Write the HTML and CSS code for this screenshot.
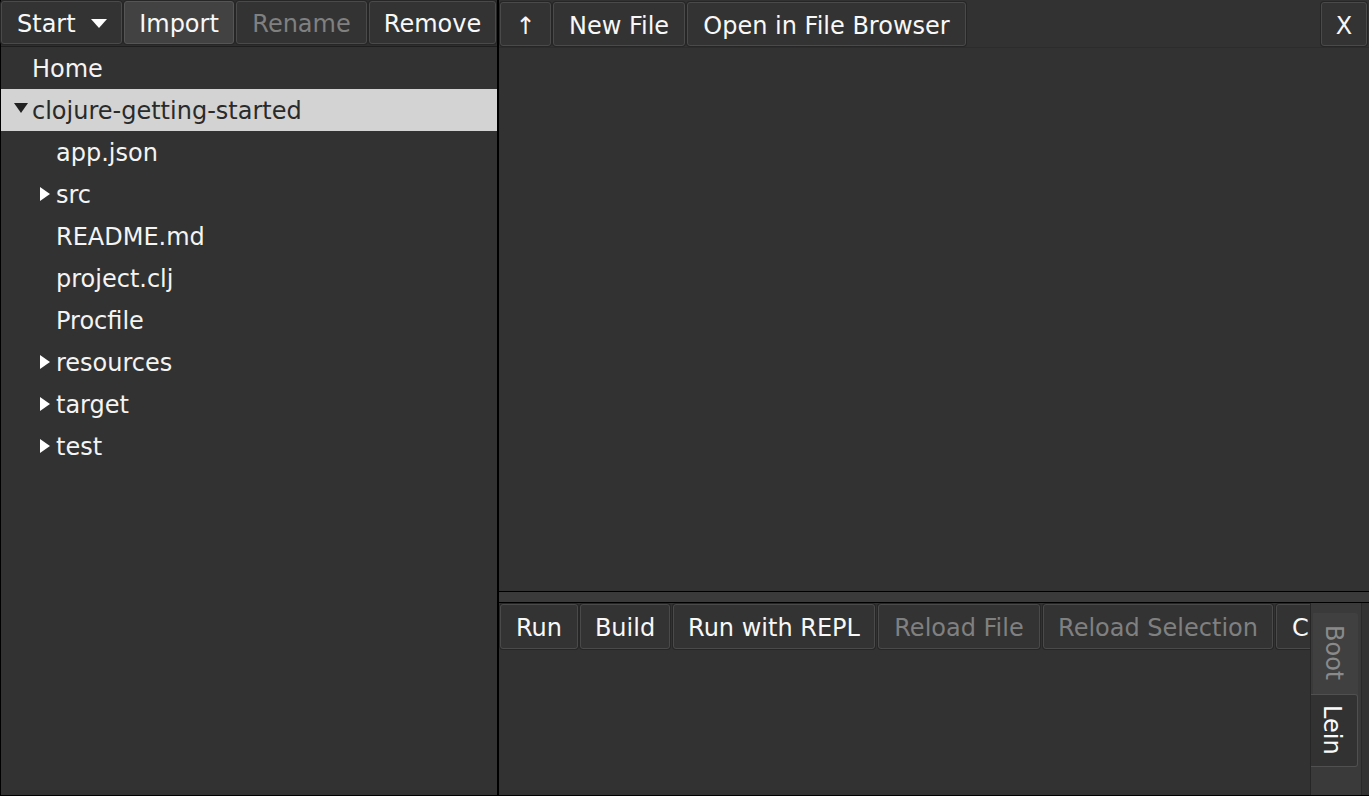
FILE: index.html
```html
<!DOCTYPE html>
<html>
<head>
<meta charset="utf-8">
<link rel="stylesheet" href="styles.css">
</head>
<body>
<div class="app">
  <div class="left">
    <div class="toolbar left-toolbar">
      <div class="btn btn-start">Start <span class="caret"></span></div>
      <div class="btn btn-hover w-import">Import</div>
      <div class="btn disabled w-rename">Rename</div>
      <div class="btn w-remove">Remove</div>
    </div>
    <div class="tree">
      <div class="row lvl0">Home</div>
      <div class="row lvl0 selected"><span class="tri down"></span>clojure-getting-started</div>
      <div class="row lvl1">app.json</div>
      <div class="row lvl1"><span class="tri right"></span>src</div>
      <div class="row lvl1">README.md</div>
      <div class="row lvl1">project.clj</div>
      <div class="row lvl1">Procfile</div>
      <div class="row lvl1"><span class="tri right"></span>resources</div>
      <div class="row lvl1"><span class="tri right"></span>target</div>
      <div class="row lvl1"><span class="tri right"></span>test</div>
    </div>
  </div>
  <div class="right">
    <div class="top-pane">
      <div class="toolbar right-toolbar">
        <div class="btn w-up">↑</div>
        <div class="btn w-newfile">New File</div>
        <div class="btn w-open">Open in File Browser</div>
        <div class="spacer"></div>
        <div class="btn w-x">X</div>
      </div>
      <div class="editor"></div>
    </div>
    <div class="divider"></div>
    <div class="bottom-pane">
      <div class="bottom-main">
        <div class="toolbar run-toolbar">
          <div class="btn w-run">Run</div>
          <div class="btn w-build">Build</div>
          <div class="btn w-repl">Run with REPL</div>
          <div class="btn disabled w-rfile">Reload File</div>
          <div class="btn disabled w-rsel">Reload Selection</div>
          <div class="btn">Clean</div>
        </div>
      </div>
      <div class="tabs">
        <div class="tab inactive">Boot</div>
        <div class="tab active">Lein</div>
      </div>
    </div>
  </div>
</div>
</body>
</html>
```

FILE: styles.css
```css
* { box-sizing: border-box; }
html, body {
  margin: 0;
  padding: 0;
  background: #323232;
}
body {
  font-family: "DejaVu Sans", sans-serif;
  font-size: 24px;
  color: #f4f4f4;
  width: 1369px;
  height: 796px;
  overflow: hidden;
}
.app {
  display: flex;
  width: 1369px;
  height: 796px;
  border-left: 1px solid #000;
  border-bottom: 1px solid #000;
}
.left {
  width: 498px;
  border-right: 2px solid #000;
  display: flex;
  flex-direction: column;
  background: #323232;
}
.toolbar {
  display: flex;
  align-items: stretch;
  gap: 2px;
}
.left-toolbar {
  height: 47px;
  padding: 1px 1px 2px 0;
  border-bottom: 1px solid #1e1e1e;
  background: #2e2e2e;
}
.btn {
  display: flex;
  align-items: center;
  justify-content: center;
  padding: 3px 15px 0;
  background: #333333;
  border: 1px solid #4a4a4a;
  border-radius: 3px;
  box-shadow: 0 0 0 1px #262626;
  white-space: nowrap;
  color: #f8f8f8;
  flex: none;
}
.btn.disabled { color: #808080; }
.btn-hover { background: #424242; border-color: #555; }
.btn-start { width: 121px; justify-content: flex-start; }
.w-import { width: 110px; }
.w-rename { width: 131px; }
.w-remove { width: 127px; }
.w-up { width: 51px; padding-left: 0; padding-right: 0; }
.w-newfile { width: 132px; }
.w-open { width: 279px; }
.w-x { width: 46px; padding-left: 0; padding-right: 0; }
.w-run { width: 78px; }
.w-build { width: 90px; }
.w-repl { width: 202px; }
.w-rfile { width: 162px; }
.w-rsel { width: 230px; }
.caret {
  display: inline-block;
  width: 0; height: 0;
  border-left: 8px solid transparent;
  border-right: 8px solid transparent;
  border-top: 9px solid #fff;
  margin-left: 15px;
  margin-top: -2px;
}
.tree { flex: 1; }
.row {
  height: 42px;
  display: flex;
  align-items: center;
  position: relative;
  padding-top: 2px;
}
.lvl0 { padding-left: 31px; }
.lvl1 { padding-left: 55px; }
.row.selected { background: #d3d3d3; color: #2a2a2a; }
.tri {
  position: absolute;
  width: 0; height: 0;
}
.tri.down {
  left: 13px; top: 14px;
  border-left: 7px solid transparent;
  border-right: 7px solid transparent;
  border-top: 10px solid #222;
}
.tri.right {
  left: 39px; top: 14px;
  border-top: 7px solid transparent;
  border-bottom: 7px solid transparent;
  border-left: 10px solid #fff;
}
.right {
  flex: 1;
  display: flex;
  flex-direction: column;
  min-width: 0;
}
.top-pane {
  height: 591px;
  display: flex;
  flex-direction: column;
}
.right-toolbar {
  height: 47px;
  padding: 2px 2px 1px 1px;
  gap: 2px;
}
.spacer { flex: 1; }
.editor { flex: 1; border-top: 1px solid #2c2c2c; }
.divider {
  height: 12px;
  border-top: 1px solid #000;
  border-bottom: 1px solid #000;
  background: #3a3a3a;
}
.bottom-pane {
  flex: 1;
  display: flex;
  min-height: 0;
}
.bottom-main {
  flex: 1;
  overflow: hidden;
  min-width: 0;
}
.run-toolbar {
  height: 47px;
  padding: 1px 0 1px 1px;
  gap: 3px;
}
.run-toolbar .w-run { margin-right: -1px; }
.tabs {
  width: 59px;
  background: #3a3a3a;
  border-left: 1px solid #262626;
  padding: 10px 11px 0 0;
  box-shadow: inset -7px 0 0 #333, inset -8px 0 0 #2a2a2a;
  display: flex;
  flex-direction: column;
  align-items: flex-end;
}
.tab {
  writing-mode: vertical-rl;
  display: flex;
  align-items: center;
  justify-content: flex-start;
  border-radius: 0 3px 3px 0;
}
.tab.inactive {
  height: 87px;
  color: #8a8a8a;
  background: #404040;
  padding-top: 12px;
  padding-right: 4px;
  width: 45px;
}
.tab.active {
  height: 73px;
  color: #fafafa;
  background: #323232;
  border: 1px solid #505050;
  border-left: none;
  padding-top: 10px;
  padding-right: 4px;
  margin-top: -6px;
  width: 47px;
}
```
